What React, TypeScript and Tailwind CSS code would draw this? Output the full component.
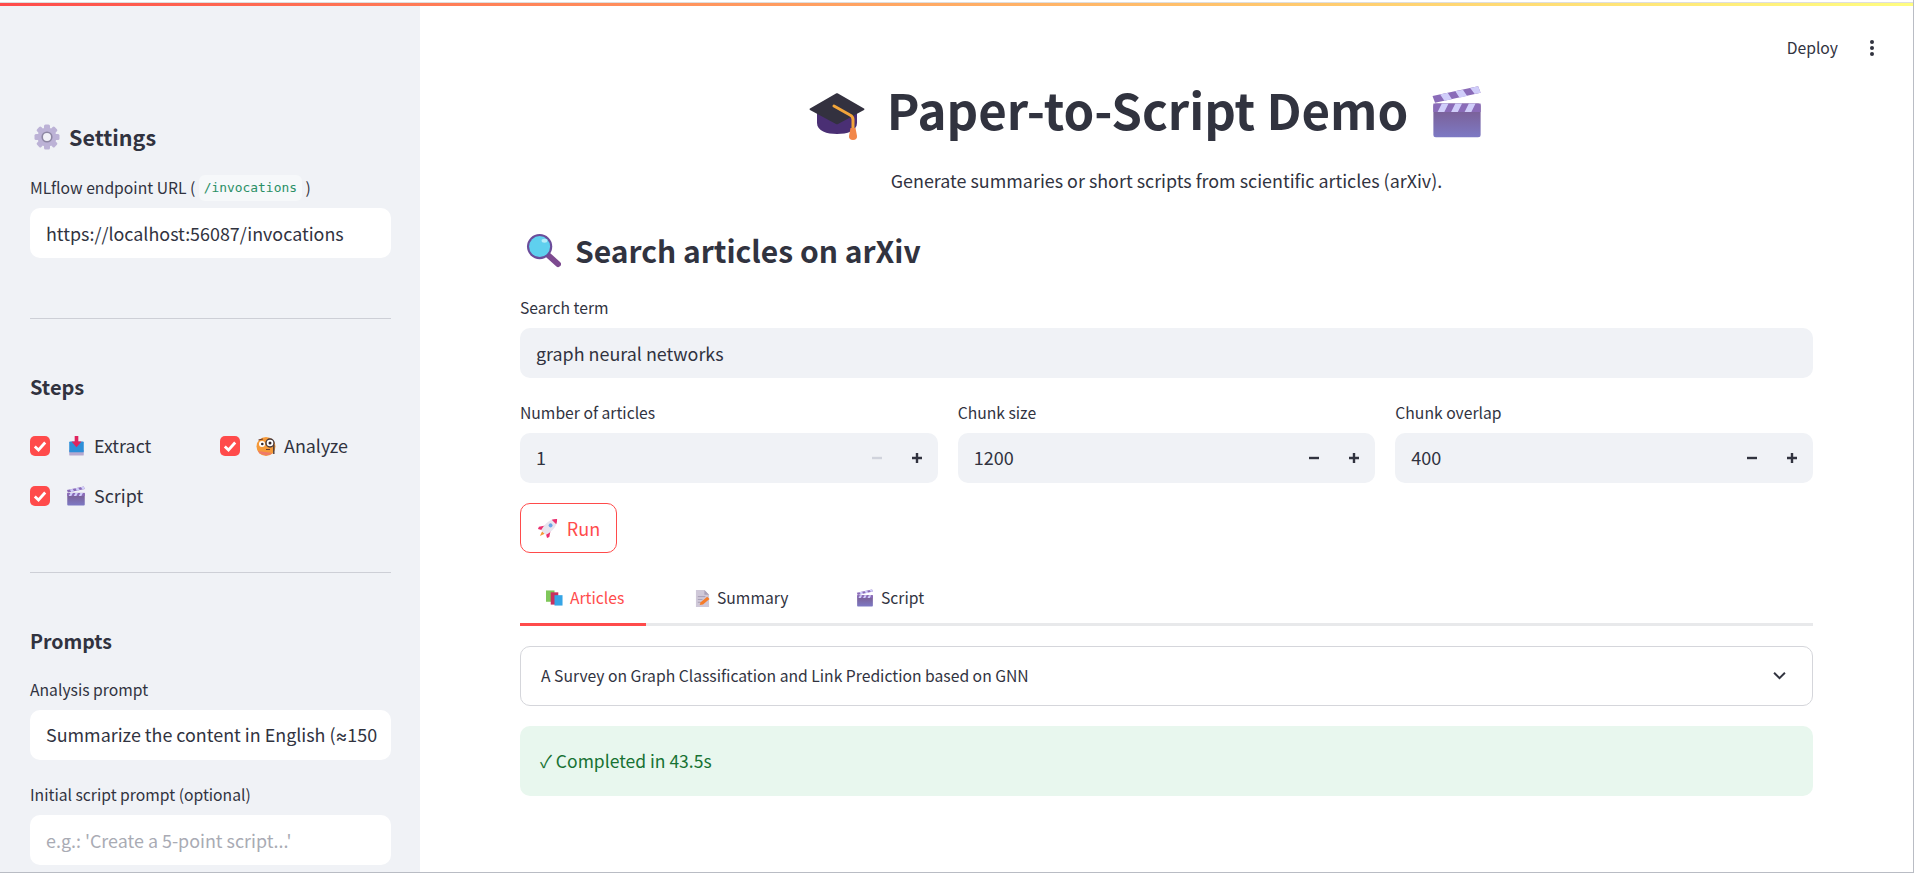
import React from "react";

const Clapper = ({ className }: { className: string }) => (
  <svg viewBox="0 0 32 32" className={className}>
    <defs>
      <linearGradient id="clap" x1="0" y1="0" x2="0" y2="1">
        <stop offset="0" stopColor="#7a5a8c" />
        <stop offset="1" stopColor="#7d79c4" />
      </linearGradient>
    </defs>
    <rect x="2" y="11" width="28" height="20" rx="1.5" fill="url(#clap)" />
    <rect x="2" y="11" width="28" height="5" fill="#8a6bb8" />
    <path d="M7 11h4l-2.500 5h-4zM15 11h4l-2.500 5h-4zM23 11h4l-2.500 5h-4z" fill="#d0cdfa" />
    <path d="M1.500 6.500 28.500 0.800 30 4.600 3 10.500z" fill="#8a6bb8" />
    <path d="M6 5.600 10.500 4.600 13 8.400 8.500 9.400zM15 3.700 19.500 2.800 22 6.500 17.500 7.500zM23.800 1.800 28.500 0.800 30 4.600 26.500 5.400z" fill="#d0cdfa" />
  </svg>
);

const Cap = ({ className }: { className: string }) => (
  <svg viewBox="0 0 56 48" className={className}>
    <path d="M8 19v12c0 8 10 11 20 11s20-3 20-11V19z" fill="#4a2f74" />
    <path d="M27 1.500c.7-.4 1.300-.4 2 0L55 16.500c.6.400.6 1 0 1.400L29 32c-.7.400-1.300.4-2 0L1 18c-.6-.4-.6-1 0-1.400z" fill="#33313f" />
    <path d="M25 14 41 23c2 1 3 2.500 3 4.500V37" fill="none" stroke="#f2a53a" strokeWidth="3" strokeLinecap="round" />
    <path d="M41.500 36h5l1.500 8c.3 2.500-1.500 4-4 4s-4.300-1.500-4-4z" fill="#f2874a" />
  </svg>
);

const Gear = () => (
  <svg viewBox="0 0 26 26" className="w-[26px] h-[26px]">
    <g fill="#bcb2d6">
      {[0, 45, 90, 135, 180, 225, 270, 315].map((r) => (
        <rect key={r} x="10" y="0.500" width="6" height="6" rx="1.500" transform={`rotate(${r} 13 13)`} />
      ))}
      <circle cx="13" cy="13" r="9.500" />
    </g>
    <circle cx="13" cy="13" r="4.800" fill="#f1f0f7" stroke="#8d86a3" strokeWidth="1.600" />
  </svg>
);

const Inbox = () => (
  <svg viewBox="0 0 18 22" className="w-[17px] h-[20px]">
    <rect x="1" y="15" width="16" height="6.500" rx="1" fill="#b5a9d0" />
    <rect x="1" y="6" width="16" height="12" rx="1" fill="#2d8fd8" />
    <path d="M7 0h4v6h3.500L9 12.500 3.500 6H7z" fill="#e0245e" />
  </svg>
);

const Monocle = () => (
  <svg viewBox="0 0 20 20" className="w-[20px] h-[20px]">
    <circle cx="10" cy="10.500" r="9.500" fill="#f59a3a" />
    <path d="M2 15c2 4 10 6 14 2z" fill="#ef7a6a" />
    <circle cx="6" cy="8" r="3" fill="#fff" />
    <circle cx="6.300" cy="8" r="1.300" fill="#33272a" />
    <circle cx="14" cy="7" r="4" fill="#fff" stroke="#4a3a3a" strokeWidth="1.400" />
    <circle cx="14" cy="7" r="1.500" fill="#33272a" />
    <path d="M17.800 9v9" stroke="#4a3a3a" strokeWidth="1.400" />
    <path d="M2.500 4 7 3M10 13.500h4" stroke="#6b3a2a" strokeWidth="1.200" fill="none" />
  </svg>
);

const Magnifier = () => (
  <svg viewBox="0 0 36 36" className="w-[35px] h-[35px]">
    <path d="M23 23 33 32" stroke="#7d4a90" strokeWidth="6" strokeLinecap="round" />
    <circle cx="14" cy="14" r="13" fill="#6b4c9a" />
    <circle cx="14" cy="14" r="10.800" fill="#5fd0ee" />
    <ellipse cx="19" cy="8" rx="3" ry="2" fill="#b5ecf8" />
  </svg>
);

const Rocket = () => (
  <svg viewBox="0 0 24 24" className="w-[22px] h-[22px]">
    <g transform="rotate(45 12 12)">
      <path d="M10 19h4l-2 5.500z" fill="#f59a3a" />
      <path d="M8 12 4 18l1 2.500 3.500-2zM16 12l4 6-1 2.500-3.500-2z" fill="#ec2f6e" />
      <path d="M12 -2c3.500 3 5 7.500 5 12 0 3.500-.6 6.500-1.500 9h-7C7.600 16.500 7 13.500 7 10c0-4.500 1.500-9 5-12z" fill="#e9e5ef" />
      <path d="M12 -2c1.500 1.300 2.700 3 3.500 4.800h-7C9.300 1 10.500-.7 12-2z" fill="#ec2f6e" />
      <circle cx="12" cy="8" r="2.200" fill="#6aa6e8" />
    </g>
  </svg>
);

const Books = () => (
  <svg viewBox="0 0 18 16" className="w-[17px] h-[16px]">
    <rect x="0" y="0" width="9" height="12" fill="#7fc75a" />
    <rect x="5" y="2" width="8" height="13" fill="#c9305f" />
    <rect x="9" y="5" width="8.500" height="11" fill="#35a5e6" />
  </svg>
);

const Memo = () => (
  <svg viewBox="0 0 16 18" className="w-[15px] h-[17px]">
    <path d="M1 0h9l5 5v13H1z" fill="#cfc8d8" />
    <path d="M10 0l5 5h-5z" fill="#aaa2b8" />
    <path d="M3 7h8M3 10h5M3 13h3" stroke="#a49cb2" strokeWidth="1" />
    <path d="M5 16l1-3 7-6 2.500 2.500-7 6z" fill="#f57c2a" />
  </svg>
);

const Check = () => (
  <span className="w-5 h-5 rounded-[5px] bg-[#ff4b4b] flex items-center justify-center shrink-0">
    <svg viewBox="0 0 16 16" className="w-4 h-4">
      <path d="M2.800 8.500 6.500 12 13.200 4.500" fill="none" stroke="#fff" strokeWidth="2.800" />
    </svg>
  </span>
);

const Step = ({ icon, label, className }: { icon: React.ReactNode; label: string; className: string }) => (
  <div className={`flex items-center h-5 ${className}`}>
    <Check />
    <span className="ml-[16px] w-5 flex justify-center">{icon}</span>
    <span className="ml-[8px] text-[17.900px] leading-5 -translate-y-px">{label}</span>
  </div>
);

const Label = ({ children }: { children: React.ReactNode }) => (
  <label className="text-[15.700px] leading-5 h-5 mb-[10px] flex items-center whitespace-pre">{children}</label>
);

const Field = ({ label, value, placeholder, className }: { label: React.ReactNode; value?: React.ReactNode; placeholder?: string; className: string }) => (
  <div className="flex flex-col">
    <Label>{label}</Label>
    <div className={`h-[50px] w-full rounded-[10px] pl-4 flex items-center pb-px ${className}`}>
      <div className={`w-full overflow-hidden whitespace-nowrap text-[17.900px] leading-[30px] mr-[11px] ${value ? "text-[#31333f]" : "text-[#a9abb4]"}`}>
        {value ?? placeholder}
      </div>
    </div>
  </div>
);

const NumberField = ({ label, value, disabledMinus }: { label: string; value: string; disabledMinus?: boolean }) => (
  <div className="flex flex-col flex-1 min-w-0">
    <label className="text-[15.700px] leading-5 h-5 mb-[10px]">{label}</label>
    <div className="h-[50px] rounded-[10px] bg-[#f0f2f6] flex items-center pl-4 text-[18px] pb-px">
      <span className="flex-1">{value}</span>
      <svg viewBox="0 0 12 12" className="w-3 h-3 mr-7">
        <path d="M1 6h10" stroke={disabledMinus ? "#d0d3dc" : "#31333f"} strokeWidth="2.400" />
      </svg>
      <svg viewBox="0 0 12 12" className="w-3 h-3 mr-[15px]">
        <path d="M1 6h10M6 1v10" stroke="#31333f" strokeWidth="2.400" />
      </svg>
    </div>
  </div>
);

const Tab = ({ icon, label, active, className }: { icon: React.ReactNode; label: string; active?: boolean; className: string }) => (
  <div className={`h-[50px] -mb-[3px] pb-[3px] flex items-center gap-[7px] text-[15.700px] border-b-[3px] ${active ? "border-[#ff4b4b] text-[#ff4b4b]" : "border-transparent"} ${className}`}>
    {icon}
    <span>{label}</span>
  </div>
);

export default function App() {
  return (
    <div
      className="h-[873px] overflow-hidden flex flex-col bg-white text-[#31333f] border-r border-b border-[#b9bcc4]"
      style={{ fontFamily: '"Noto Sans CJK SC", "Noto Sans", sans-serif' }}
    >
      <div className="h-[2px] shrink-0 bg-white" />
      <div className="h-px shrink-0 bg-[#dedede]" />
      <div className="h-[3px] shrink-0 bg-linear-to-r from-[#ff4b4b] to-[#fffd80]" />
      <div className="flex flex-1 min-h-0">
        <aside className="w-[420px] shrink-0 bg-[#f0f2f6] pl-[30px] pr-[29px] pt-[113px]">
          <div className="flex items-center h-9 gap-[9px] pl-1">
            <Gear />
            <h3 className="text-[21.500px] leading-9 font-semibold">Settings</h3>
          </div>
          <div className="mt-[23px]">
            <Field
              className="bg-white"
              value="https://localhost:56087/invocations"
              label={
                <>
                  {"MLflow endpoint URL ( "}
                  <code
                    className="text-[12.900px] text-[#2a8f66] bg-[#f6f8fa] rounded-[6px] px-[5px] py-[3px]"
                    style={{ fontFamily: '"DejaVu Sans Mono", monospace' }}
                  >
                    /invocations
                  </code>
                  {" )"}
                </>
              }
            />
          </div>
          <hr className="mt-[60px] border-0 h-px bg-[#cdcfd6]" />
          <h4 className="mt-[54px] text-[20px] leading-7 font-semibold">Steps</h4>
          <div className="mt-[35px] flex flex-wrap gap-y-[30px]">
            <Step className="w-[190px]" icon={<Inbox />} label="Extract" />
            <Step className="w-[170px]" icon={<Monocle />} label="Analyze" />
            <Step className="w-[190px]" icon={<Clapper className="w-5 h-5" />} label="Script" />
          </div>
          <hr className="mt-[66px] border-0 h-px bg-[#cdcfd6]" />
          <h4 className="mt-[54px] text-[19.500px] leading-7 font-semibold">Prompts</h4>
          <div className="mt-[25px]">
            <Field
              className="bg-white"
              label="Analysis prompt"
              value={
                <>
                  Summarize the content in English (<span style={{ fontFamily: "Inter, sans-serif" }}>≈</span>150 words)
                </>
              }
            />
          </div>
          <div className="mt-[25px]">
            <Field className="bg-white" label="Initial script prompt (optional)" placeholder="e.g.: 'Create a 5-point script...'" />
          </div>
        </aside>
        <main className="flex-1 min-w-0 px-[100px] relative">
          <div className="absolute top-[30px] right-[38px] flex items-center gap-[31px]">
            <span className="text-[15.700px] leading-6">Deploy</span>
            <svg viewBox="0 0 6 18" className="w-[6px] h-[18px]">
              <circle cx="3" cy="3" r="2" fill="#31333f" />
              <circle cx="3" cy="9" r="2" fill="#31333f" />
              <circle cx="3" cy="15" r="2" fill="#31333f" />
            </svg>
          </div>
          <div className="flex items-end justify-center h-[70px] mt-[68px] gap-[22px] pr-[40px]">
            <Cap className="w-[56px] h-[48px] mb-[4px]" />
            <h1 className="text-[49.200px] leading-[70px] font-bold whitespace-nowrap">Paper-to-Script Demo</h1>
            <Clapper className="w-[54px] h-[54px] mb-[5px]" />
          </div>
          <p className="mt-[24px] text-center text-[17.900px] leading-6">Generate summaries or short scripts from scientific articles (arXiv).</p>
          <div className="mt-[36px] flex items-center h-11 gap-[14px] pl-[6px]">
            <Magnifier />
            <h2 className="text-[30px] leading-[44px] font-semibold">Search articles on arXiv</h2>
          </div>
          <div className="mt-[26px]">
            <Field className="bg-[#f0f2f6]" label="Search term" value="graph neural networks" />
          </div>
          <div className="mt-[25px] flex gap-5">
            <NumberField label="Number of articles" value="1" disabledMinus />
            <NumberField label="Chunk size" value="1200" />
            <NumberField label="Chunk overlap" value="400" />
          </div>
          <button className="mt-5 h-[50px] w-[97px] rounded-[10px] border border-[#ff4b4b] text-[#ff4b4b] flex items-center justify-center gap-[8px] text-[18px]">
            <Rocket />
            Run
          </button>
          <div className="mt-[23px] flex border-b-[3px] border-[#e8e9eb]">
            <Tab className="w-[126px] pl-[26px]" active icon={<Books />} label="Articles" />
            <Tab className="ml-[49px] w-[126px]" icon={<Memo />} label="Summary" />
            <Tab className="ml-[35px]" icon={<Clapper className="w-[18px] h-[18px]" />} label="Script" />
          </div>
          <div className="mt-5 h-[60px] rounded-[10px] border border-[#d5d6db] flex items-center pl-5 pr-[26px] pb-px text-[15.700px]">
            <span className="flex-1">A Survey on Graph Classification and Link Prediction based on GNN</span>
            <svg viewBox="0 0 12 8" className="w-[13px] h-[9px]">
              <path d="M1 1.500 6 6.500l5-5" fill="none" stroke="#31333f" strokeWidth="1.800" />
            </svg>
          </div>
          <div className="mt-5 h-[70px] rounded-[10px] bg-[#e8f7ee] text-[#177233] flex items-center pl-[20px] text-[17.500px]">
            ✓ Completed in 43.5s
          </div>
        </main>
      </div>
    </div>
  );
}
